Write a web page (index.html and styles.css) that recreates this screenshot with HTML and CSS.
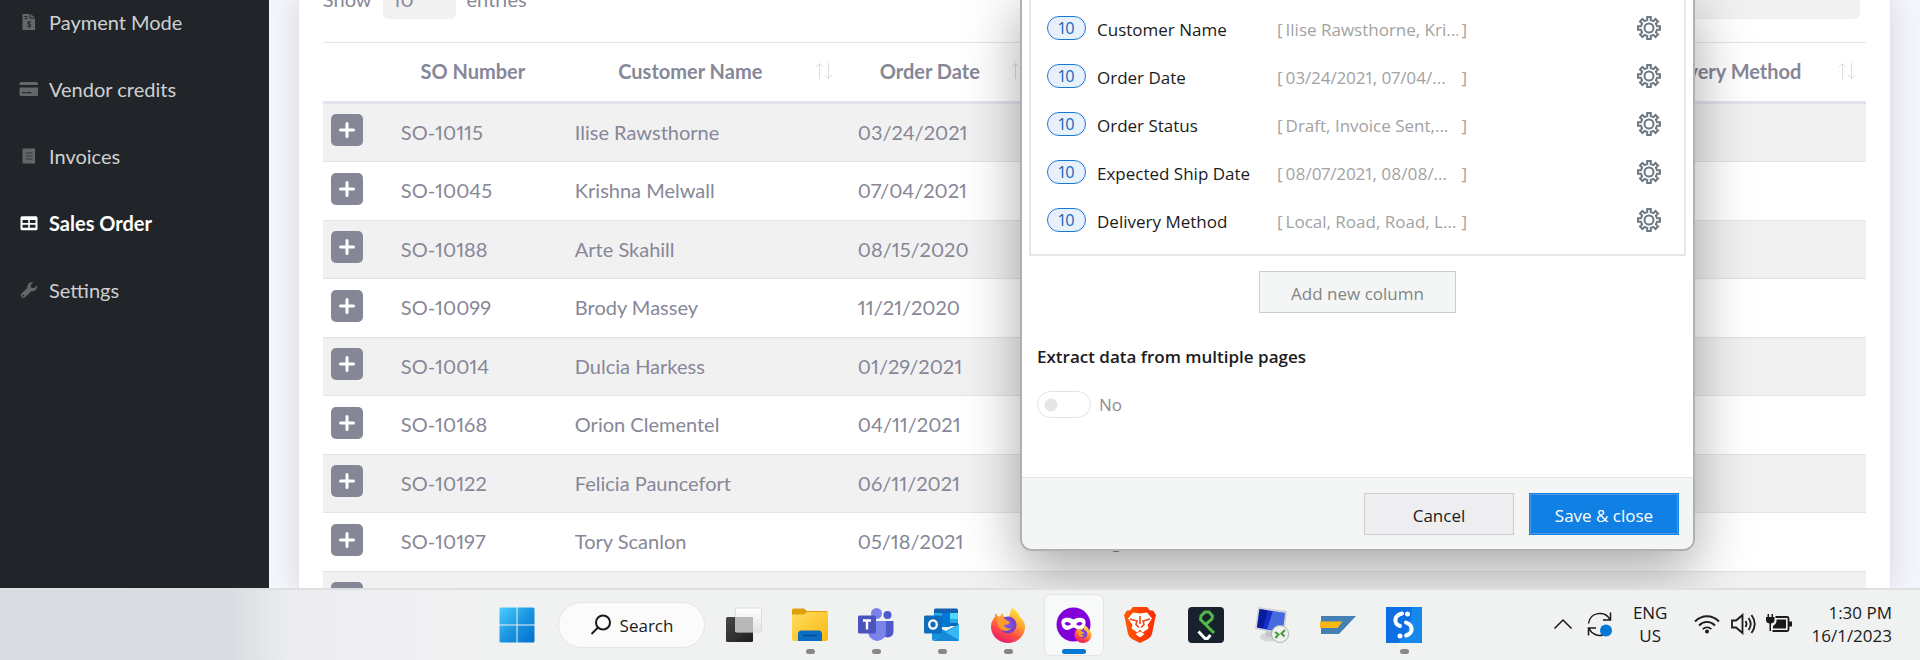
FILE: index.html
```html
<!DOCTYPE html>
<html lang="en">
<head>
<meta charset="utf-8">
<title>Sales Order</title>
<link rel="stylesheet" href="styles.css">
</head>
<body>
<svg class="sprite" aria-hidden="true">
  <symbol id="gear" viewBox="0 0 24 24"><path d="M10.2 4V1h3.6v3L16.4 5.1 18.5 2.95 21.05 5.5 18.9 7.6 20 10.2H23v3.6H20L18.9 16.4 21.05 18.5 18.5 21.05 16.4 18.9 13.8 20v3H10.2V20L7.6 18.9 5.5 21.05 2.95 18.5 5.1 16.4 4 13.8H1V10.2H4L5.1 7.6 2.95 5.5 5.5 2.95 7.6 5.1Z"/><circle cx="12" cy="12" r="4.5"/></symbol>
  <symbol id="sort" viewBox="0 0 18 18"><path d="M4.500 17V1.500M1 5l3.500-3.500L8 5M13.500 1v15.500M10 13l3.500 3.500L17 13"/></symbol>
  <symbol id="plus" viewBox="0 0 16 16"><path d="M8 1.500v13M1.500 8h13"/></symbol>
  <linearGradient id="fx" x1="0.8" y1="0" x2="0.3" y2="1"><stop offset="0" stop-color="#fff044"/><stop offset=".4" stop-color="#ffa02f"/><stop offset=".7" stop-color="#ff4a45"/><stop offset="1" stop-color="#e81a6d"/></linearGradient>
  <radialGradient id="fxg"><stop offset="0" stop-color="#7a5bf0"/><stop offset="1" stop-color="#7a3bc4"/></radialGradient>
  <symbol id="firefox" viewBox="0 0 36 36">
    <path fill="url(#fx)" d="M22 1c6 3 7 7 8 9 4 3 5 7 5 10a17 16 0 0 1-34 0c0-5 2-8 4-10V6l4 4 4-4c0 2 0 3 1 4l5 1c1-5 2-8 3-10Z"/>
    <circle cx="18" cy="18" r="8.500" fill="url(#fxg)"/>
    <path fill="#ff9a2e" d="M8 11c3-2 6-1 8 2l4 2c-1 2-3 3-6 3 1 3 4 4 7 3-3 5-12 3-13-3-1-3-1-5 0-7Z"/>
  </symbol>
</svg>
<main class="app">
  <nav class="sidebar">
    <a class="nav-link" href="#payment"><svg class="nav-icon" viewBox="0 0 20 16"><path fill="currentColor" fill-rule="evenodd" d="M3.500 0h7v4.500H16V16H3.500ZM5.500 2v1h3V2ZM5.500 4v1h3V4Z"/><path fill="currentColor" d="M11.500 0L16 3.500h-4.500Z"/><path d="M12 8.200c-1-.7-3.500-.7-3.500.7 0 1.700 3.500.9 3.500 2.600 0 1.400-2.700 1.400-3.700.5M10.200 7v7" fill="none" stroke="#212529"/></svg>Payment Mode</a>
    <a class="nav-link" href="#vendor"><svg class="nav-icon" viewBox="0 0 20 16"><path fill="currentColor" fill-rule="evenodd" d="M2 1h15.500q1.500 0 1.500 1.500V4H0.500V2.500Q0.500 1 2 1ZM.5 6.500H19v7q0 1.500-1.500 1.500H2Q.5 15 .5 13.500ZM3.500 11v1.200h3V11ZM7.500 11v1.200h5V11Z"/></svg>Vendor credits</a>
    <a class="nav-link" href="#invoices"><svg class="nav-icon" viewBox="0 0 20 16"><path fill="currentColor" d="M3.500 0l1.300 1 1.300-1 1.300 1 1.300-1 1.300 1 1.300-1 1.300 1 1.300-1 1.300 1 .8-1V16l-.8-1-1.300 1-1.300-1-1.300 1-1.300-1-1.300 1-1.300-1-1.300 1-1.300-1-1.300 1Z"/><path d="M6.500 5h7M6.500 8h7M6.500 11h7" stroke="#33373a"/></svg>Invoices</a>
    <a class="nav-link nav-link-active" href="#sales"><svg class="nav-icon" viewBox="0 0 20 16"><path fill="currentColor" fill-rule="evenodd" d="M3 1.200h14q1.500 0 1.500 1.500v11q0 1.500-1.500 1.500H3q-1.500 0-1.500-1.500v-11Q1.500 1.200 3 1.200ZM3.500 5v3h5.700V5ZM10.800 5v3h5.700V5ZM3.500 9.800v3h5.700v-3ZM10.800 9.800v3h5.700v-3Z"/></svg>Sales Order</a>
    <a class="nav-link" href="#settings"><svg class="nav-icon" viewBox="0 0 20 16"><path fill="currentColor" fill-rule="evenodd" d="M17.800 3.200c1.100 3.500-1.600 6.600-5.400 6L6 15.200c-2.300 2-5.600-1.200-3.700-3.600L8.400 6C7.800 2.200 10.500-.6 14.300.3L11.700 3l.5 2.800 2.900.5ZM4.200 12.700a.8.8 0 1 0 .1 0Z"/></svg>Settings</a>
  </nav>
  <section class="content">
    <div class="card">
      <div class="table-tools">
        <label class="length" for="len">Show <select id="len" class="field length-select"><option>10</option></select> entries</label>
        <input class="field search-field" type="search" aria-label="Search table">
      </div>
      <table class="orders">
        <colgroup><col class="c-plus"><col class="c-so"><col class="c-name"><col class="c-date"><col class="c-status"><col class="c-ship"><col class="c-method"></colgroup>
        <thead><tr>
          <th></th><th>SO Number</th>
          <th class="sortable"><div class="th-row"><span>Customer Name</span><svg class="sort"><use href="#sort"/></svg></div></th>
          <th class="sortable"><div class="th-row"><span>Order Date</span><svg class="sort"><use href="#sort"/></svg></div></th>
          <th></th><th></th>
          <th class="sortable"><div class="th-row"><span>Delivery Method</span><svg class="sort"><use href="#sort"/></svg></div></th>
        </tr></thead>
        <tbody>
          <tr><td><button class="expand" aria-label="Expand"><svg><use href="#plus"/></svg></button></td><td>SO-10115</td><td>Ilise Rawsthorne</td><td>03/24/2021</td><td></td><td></td><td></td></tr>
          <tr><td><button class="expand" aria-label="Expand"><svg><use href="#plus"/></svg></button></td><td>SO-10045</td><td>Krishna Melwall</td><td>07/04/2021</td><td></td><td></td><td></td></tr>
          <tr><td><button class="expand" aria-label="Expand"><svg><use href="#plus"/></svg></button></td><td>SO-10188</td><td>Arte Skahill</td><td>08/15/2020</td><td></td><td></td><td></td></tr>
          <tr><td><button class="expand" aria-label="Expand"><svg><use href="#plus"/></svg></button></td><td>SO-10099</td><td>Brody Massey</td><td>11/21/2020</td><td></td><td></td><td></td></tr>
          <tr><td><button class="expand" aria-label="Expand"><svg><use href="#plus"/></svg></button></td><td>SO-10014</td><td>Dulcia Harkess</td><td>01/29/2021</td><td></td><td></td><td></td></tr>
          <tr><td><button class="expand" aria-label="Expand"><svg><use href="#plus"/></svg></button></td><td>SO-10168</td><td>Orion Clementel</td><td>04/11/2021</td><td></td><td></td><td></td></tr>
          <tr><td><button class="expand" aria-label="Expand"><svg><use href="#plus"/></svg></button></td><td>SO-10122</td><td>Felicia Pauncefort</td><td>06/11/2021</td><td></td><td></td><td></td></tr>
          <tr><td><button class="expand" aria-label="Expand"><svg><use href="#plus"/></svg></button></td><td>SO-10197</td><td>Tory Scanlon</td><td>05/18/2021</td><td>Packing</td><td></td><td></td></tr>
          <tr><td><button class="expand" aria-label="Expand"><svg><use href="#plus"/></svg></button></td><td></td><td></td><td></td><td></td><td></td><td></td></tr>
        </tbody>
      </table>
    </div>
  </section>
  <div class="dialog" role="dialog" aria-label="Extract data">
    <div class="dialog-body">
      <ul class="columns">
        <li class="column"><span class="count">10</span><span class="column-name">Customer Name</span><span class="preview"><span>[</span><span class="preview-text">Ilise Rawsthorne, Kri...</span><span>]</span></span><button class="gear" aria-label="Customer Name settings"><svg><use href="#gear"/></svg></button></li>
        <li class="column"><span class="count">10</span><span class="column-name">Order Date</span><span class="preview"><span>[</span><span class="preview-text">03/24/2021, 07/04/...</span><span>]</span></span><button class="gear" aria-label="Order Date settings"><svg><use href="#gear"/></svg></button></li>
        <li class="column"><span class="count">10</span><span class="column-name">Order Status</span><span class="preview"><span>[</span><span class="preview-text">Draft, Invoice Sent,...</span><span>]</span></span><button class="gear" aria-label="Order Status settings"><svg><use href="#gear"/></svg></button></li>
        <li class="column"><span class="count">10</span><span class="column-name">Expected Ship Date</span><span class="preview"><span>[</span><span class="preview-text">08/07/2021, 08/08/...</span><span>]</span></span><button class="gear" aria-label="Expected Ship Date settings"><svg><use href="#gear"/></svg></button></li>
        <li class="column"><span class="count">10</span><span class="column-name">Delivery Method</span><span class="preview"><span>[</span><span class="preview-text">Local, Road, Road, L...</span><span>]</span></span><button class="gear" aria-label="Delivery Method settings"><svg><use href="#gear"/></svg></button></li>
      </ul>
      <button class="btn btn-add">Add new column</button>
      <h2 class="dialog-heading">Extract data from multiple pages</h2>
      <label class="toggle-row"><input class="toggle" type="checkbox" role="switch">No</label>
    </div>
    <footer class="dialog-footer">
      <button class="btn btn-cancel">Cancel</button>
      <button class="btn btn-save">Save &amp; close</button>
    </footer>
  </div>
</main>
<footer class="taskbar">
  <div class="task-items">
    <button class="task" aria-label="Start"><svg class="task-icon" viewBox="0 0 36 36"><defs><linearGradient id="w" x1="0" y1="0" x2="1" y2="1" ><stop offset="0" stop-color="#4ccfff"/><stop offset=".5" stop-color="#1c96e0"/><stop offset="1" stop-color="#0070cf"/></linearGradient></defs><path fill="url(#w)" d="M2 .5h15.500v17H.5V2Q.5.500 2 .5ZM18.500.5H34q1.500 0 1.500 1.500v15.500h-17ZM.5 18.500h17v17H2Q.5 35.500.5 34ZM18.500 18.500h17V34q0 1.500-1.500 1.500H18.500Z"/></svg></button>
    <button class="task-search"><svg class="search-icon" viewBox="0 0 22 22"><circle cx="13" cy="8.500" r="7"/><path d="M8 13.500l-6.500 6.500"/></svg>Search</button>
    <button class="task" aria-label="Task view"><svg class="task-icon" viewBox="0 0 36 36"><defs><linearGradient id="tv" x1="0" y1="0" x2="1" y2="1"><stop offset="0" stop-color="#484848"/><stop offset="1" stop-color="#1c1c1c"/></linearGradient><linearGradient id="tw" x1="0" y1="0" x2="0" y2="1"><stop offset="0" stop-color="#fff"/><stop offset="1" stop-color="#e4e4e4"/></linearGradient></defs><rect y="10" width="27" height="25" rx="1.500" fill="url(#tv)"/><rect x="9.500" y="1" width="26" height="24" rx="1.500" fill="url(#tw)" stroke="#dcdcdc"/><rect x="9" y="10" width="18" height="15" fill="#b9b9b9"/></svg></button>
    <button class="task running" aria-label="File Explorer"><svg class="task-icon" viewBox="0 0 36 36"><defs><linearGradient id="fo" x1="0" y1="0" x2="1" y2="1"><stop offset="0" stop-color="#ffdc60"/><stop offset="1" stop-color="#fbb80f"/></linearGradient></defs><path fill="#dfa00c" d="M0 3q0-1.500 1.500-1.500h10.500L15 4h20v6H0Z"/><path fill="url(#fo)" d="M0 7.500h12L15 5h20.500q.5 0 .5 1v26q0 2-2 2H2q-2 0-2-2Z"/><path fill="#0b6cc4" d="M6 34v-7q0-3.500 3.500-3.500h17q3.500 0 3.500 3.500v7Z"/><path d="M11 28.500h14" stroke="#0a4a94" stroke-width="1.500"/></svg></button>
    <button class="task running" aria-label="Teams"><svg class="task-icon" viewBox="0 0 36 36"><circle cx="29.500" cy="8" r="4" fill="#5059c9"/><path fill="#5059c9" d="M25 14h10.500v10q0 6-6 6.500l-4.500-1Z"/><circle cx="18.500" cy="6.500" r="5.500" fill="#7b83eb"/><path fill="#7b83eb" d="M10 14h18v11q0 8-9 9-8-1-9-9Z"/><rect y="8.500" width="18" height="18" rx="1.500" fill="#4b53bc"/><path d="M5 13.500h8M9 13.500v9" stroke="#fff" stroke-width="2.400"/></svg></button>
    <button class="task running" aria-label="Outlook"><svg class="task-icon" viewBox="0 0 36 36"><path fill="#0f62b0" d="M10 3q0-1.500 1.500-1.500h21Q34 1.500 34 3v16H10Z"/><path fill="#28a8ea" d="M10 6h8v14h-8ZM26 6h8v10h-8Z"/><path fill="#0078d4" d="M18 6h8v14h-8Z"/><path fill="#50d9ff" d="M26 6h8v6h-8Z"/><path fill="#1490df" d="M8 18l14 6 13-7v15q0 2-2 2H10q-2 0-2-2Z"/><path fill="#35b8f1" d="M35 17L9 33.500q.5.500 2 .5h22q2 0 2-2Z"/><path fill="#1688d8" d="M21 25l14 8q-1 1-2 1H10Z"/><rect y="8.500" width="18" height="18" rx="1.500" fill="#0f6cbd"/><ellipse cx="9" cy="17.500" rx="3.800" ry="4.200" fill="none" stroke="#fff" stroke-width="2.300"/></svg></button>
    <button class="task running" aria-label="Firefox"><svg class="task-icon"><use href="#firefox"/></svg></button>
    <button class="task active" aria-label="Private browsing"><svg class="task-icon" viewBox="0 0 36 36"><circle cx="17.500" cy="17.500" r="17" fill="#8000d7"/><path fill="#fff" fill-rule="evenodd" d="M17.500 12.500C20 11 23 10.500 26 11c3 .6 4 3 3.500 6-.7 4-3 6-6 6-2.800 0-4-2.500-6-2.500s-3.200 2.500-6 2.500c-3 0-5.300-2-6-6C5 14 6 11.600 9 11c3-.5 6 0 8.500 1.500ZM8.500 16.500c2 2.700 4.500 2.500 6.500.5-2-2.500-5-2.800-6.500-.5ZM20 17c2 2 4.500 2.200 6.500-.5-1.500-2.300-4.500-2-6.500.5Z"/><use href="#firefox" x="18" y="18" width="18" height="18"/></svg></button>
    <button class="task" aria-label="Brave"><svg class="task-icon" viewBox="0 0 36 36"><defs><linearGradient id="br"><stop offset="0" stop-color="#ff5a00"/><stop offset="1" stop-color="#fb2a08"/></linearGradient></defs><path fill="url(#br)" d="M11 0h14l3 3.500h3L34 8l-1 4-3 15q-1 3-4 5l-8 4-8-4q-3-2-4-5L3 12 2 8l3-4.500h3Z"/><path fill="#fff" d="M18 6.500l7-1 5 6-4.500 6.500 1 3.500-6 4-2.500-3-2.500 3-6-4 1-3.500L6 11.500l5-6ZM18 24.500l4.500 2.500-4.500 3.500-4.500-3.500Z"/><path d="M8 12l7 2-1 3.500 3 3M28 12l-7 2 1 3.500-3 3M18 9v8" fill="none" stroke="#fb4312" stroke-width="1.600"/></svg></button>
    <button class="task" aria-label="Code tool"><svg class="task-icon" viewBox="0 0 36 36"><rect width="36" height="36" rx="4" fill="#18222c"/><path d="M26 26L12.500 12.500l.5-3.500 4-4h4l3.500 4-.5 3-7 6" fill="none" stroke="#50b848" stroke-width="3"/><path d="M10.500 24.500l6.500 7h2.500l3-3.500" fill="none" stroke="#fff" stroke-width="3"/></svg></button>
    <button class="task" aria-label="Remote Desktop"><svg class="task-icon" viewBox="0 0 36 36"><ellipse cx="15" cy="30" rx="9" ry="4.500" fill="#d4d6d8"/><path fill="#c2c5ca" d="M12 24h7l1 6h-8Z"/><path fill="#cfd2d6" d="M4 0l29 4-3 24L1 22Z"/><path fill="#1530c8" d="M5.500 2l25.500 4-2.500 19.500L3 20.500Z"/><path fill="#6f9cf0" d="M19 4l12 2-2.500 19.500L13 22Z" opacity=".55"/><path fill="#06128c" d="M5.500 2l8 1.500L9 21.500l-6-1Z" opacity=".7"/><circle cx="26" cy="27" r="8.500" fill="#f0f2f0" stroke="#aeb1b4"/><path d="M21 25l3.500 2.500-3 3.500M31 23l-3.500 3.500 3 3" fill="none" stroke="#3f9a35" stroke-width="2"/></svg></button>
    <button class="task" aria-label="Editor"><svg class="task-icon" viewBox="0 0 36 36"><path fill="#4580b4" d="M1 9h35L19 27H1Z"/><path fill="#fdb714" d="M0 14.500h22.500L17.500 21H0Z"/></svg></button>
    <button class="task running" aria-label="Automation"><svg class="task-icon" viewBox="0 0 36 36"><path fill="#0c6fe2" d="M0 0h36v36H0Z"/><path fill="#1e9cf4" d="M36 0v36H12Q26 24 26 0Z" opacity=".6"/><path d="M16 6.500C7 9 8 17 14 19M20 15.500c8 3 7 11 0 13" fill="none" stroke="#fff" stroke-width="4" stroke-linecap="round"/><circle cx="21.500" cy="7" r="2.500" fill="#fff"/><circle cx="14" cy="29" r="2.500" fill="#fff"/></svg></button>
  </div>
  <div class="tray">
    <button class="tray-btn" aria-label="Show hidden icons"><svg class="chevron" viewBox="0 0 20 12"><path d="M1.500 10.500L10 2l8.500 8.500"/></svg></button>
    <button class="tray-btn" aria-label="Updates"><svg class="sync" viewBox="0 0 26 26"><path d="M1.500 12.500C3 1 18 -1 23 8.500M23.500 1.500v7.500h-7.500M1.500 24.500v-7.500h7.500M2 17.500c3 6 9 8 14 6.500"/><circle cx="19" cy="19.500" r="6" class="sync-dot"/></svg></button>
    <button class="lang"><span>ENG</span><span>US</span></button>
    <button class="status" aria-label="Network, volume and battery">
      <svg class="status-icon" viewBox="0 0 26 24"><path d="M1 9.500c7-7 17-7 24 0M5 13.500c5-4.700 11-4.700 16 0M8.800 17.200c2.500-2.400 6-2.400 8.500 0" /><circle cx="13" cy="19.500" r="2" fill="#1a1a1a" stroke="none"/></svg>
      <svg class="status-icon" viewBox="0 0 26 24"><path d="M2 8.500h4L12.500 3v18L6 15.500H2ZM15.500 9q2 3 0 6M18.500 6q4.500 6 0 12M21.500 3q6.500 9 0 18"/></svg>
      <svg class="status-icon" viewBox="0 0 26 24"><path d="M9.500 5H21q1.500 0 1.500 1.500v11q0 1.500-1.500 1.500H6.500"/><path stroke="none" fill="#1a1a1a" d="M10.500 7.500H20v9H7v-2.500q3-1.500 3.500-4.500ZM23 9.500h3v5h-3ZM0 5h1.500V2H3v3h2.500V2H7v3h1.500v3q0 3-3.500 3.500V19H3.500v-7.500Q0 11 0 8Z"/></svg>
    </button>
    <button class="clock"><span>1:30 PM</span><span>16/1/2023</span></button>
  </div>
</footer>
</body>
</html>
```
FILE: styles.css
```css
* { box-sizing: border-box; }
body {
  margin: 0;
  height: 100vh;
  display: grid;
  grid-template-rows: 1fr auto;
  overflow: hidden;
  font-family: "Open Sans", "Noto Sans", sans-serif;
  font-size: 17px;
}
button { font: inherit; margin: 0; padding: 0; border: 0; background: none; color: inherit; }
.sprite { position: absolute; width: 0; height: 0; }

.app {
  position: relative;
  display: flex;
  min-height: 0;
  overflow: hidden;
  font-family: Lato, "Open Sans", sans-serif;
  font-size: 20px;
  font-variant-numeric: proportional-nums;
  color: #868797;
}
.sidebar {
  width: 14%;
  background: #212529;
  padding-left: 19px;
  margin-top: -12px;
  flex: none;
}
.nav-link {
  display: flex;
  align-items: center;
  gap: 10px;
  height: 67px;
  color: #ced0d1;
  text-decoration: none;
}
.nav-icon { width: 20px; height: 16px; color: #63676a; }
.nav-link-active { color: #fff; font-weight: 700; }
.nav-link-active .nav-icon { color: #fff; }

.content { flex: 1; min-width: 0; padding: 0 29px; background: #f5f6fb; }
.card {
  height: 100%;
  overflow: hidden;
  background: #fff;
  padding: 0 24px;
  border: solid #e4e5f0;
  border-width: 0 1px;
  box-shadow: 0 0 28px rgba(20, 20, 50, .14);
}
.table-tools {
  display: flex;
  justify-content: space-between;
  margin: -19px 6px 23px 0;
}
.length { display: flex; align-items: center; gap: 11px; padding-bottom: 2px; }
.field {
  height: 38px;
  border: 0;
  border-radius: 6px;
  background: #f1f1f1;
  color: #868797;
  font: inherit;
}
.length-select { width: 73px; padding: 0 10px 3px; margin-bottom: -2px; appearance: none; }
.search-field { width: 240px; }

.orders {
  width: 100%;
  table-layout: fixed;
  border-collapse: separate;
  border-spacing: 0;
}
.c-plus { width: 63px; }
.c-so { width: 174px; }
.c-name { width: 283px; }
.c-date { width: 196px; }
.c-status { width: 220px; }
.c-method { width: 257px; }
.orders th {
  height: 62px;
  padding: 0 15px 2px;
  border-top: 1px solid #e3e4ef;
  border-bottom: 3px solid #e1e3ed;
  font-weight: 700;
}
.orders .sortable { padding-right: 10px; }
.th-row { display: flex; align-items: center; }
.th-row span { flex: 1; }
.sort { width: 18px; height: 18px; margin-left: 9px; fill: none; stroke: #dcdde4; stroke-width: 1; }
.orders td {
  height: 59px;
  padding: 0 15px 2px;
  border-bottom: 1px solid #e1e3ee;
}
.orders tbody tr:nth-child(odd) td { height: 58px; background: #f1f1f1; }
.orders td:first-child { padding: 0 8px; }
.expand {
  display: flex;
  align-items: center;
  justify-content: center;
  width: 32px;
  height: 32px;
  margin-bottom: 5px;
  border-radius: 5px;
  background: #858796;
}
.expand svg { width: 16px; height: 16px; stroke: #fff; stroke-width: 3; stroke-linecap: round; }

.dialog {
  position: absolute;
  left: 1020px;
  bottom: 37px;
  width: 675px;
  display: flex;
  flex-direction: column;
  border: 2px solid #afb1b5;
  border-radius: 12px;
  background: #fff;
  color: #1b1b1b;
  font-family: "Open Sans", "Noto Sans", sans-serif;
  font-size: 17px;
  box-shadow: 0 20px 56px rgba(0, 0, 0, .34);
}
.dialog-body { padding: 0 7px; display: flex; flex-direction: column; }
.columns {
  margin: 0;
  padding: 12px 23px 10px 16px;
  list-style: none;
  border: 2px solid #e6e7e8;
}
.column {
  display: grid;
  grid-template-columns: 39px 169px 190px 1fr;
  column-gap: 11px;
  align-items: center;
  height: 48px;
}
.column-name, .preview { white-space: nowrap; padding-top: 2px; }
.count {
  height: 24px;
  border: 1px solid #1a78d6;
  border-radius: 12px;
  background: #e8f1fb;
  color: #1f66b0;
  font-size: 16px;
  line-height: 22px;
  text-align: center;
}
.preview { display: flex; gap: 3px; color: #a2a2a2; }
.preview-text { flex: 1; overflow: hidden; }
.gear { justify-self: end; width: 24px; height: 24px; }
.gear svg { display: block; width: 24px; height: 24px; fill: none; stroke: #6d7881; stroke-width: 2; }
.btn { height: 42px; width: 150px; border: 1px solid #cccdd1; padding-top: 2px; }
.btn-add {
  align-self: center;
  width: 197px;
  margin-top: 15px;
  background: #f4f6f5;
  color: #848484;
}
.dialog-heading {
  margin: 32px 8px 22px;
  font-size: 17px;
  line-height: 24px;
  font-weight: 600;
}
.toggle-row {
  display: flex;
  align-items: center;
  gap: 8px;
  height: 26px;
  margin: 0 8px 60px;
  color: #8e8e8e;
}
.toggle {
  appearance: none;
  width: 54px;
  height: 27px;
  margin: 0;
  border: 1px solid #e3e3e3;
  border-radius: 14px;
  background: radial-gradient(circle at 13px 13px, #e6e6e6 6px, transparent 7px);
}
.dialog-footer {
  display: flex;
  justify-content: flex-end;
  gap: 15px;
  padding: 15px 14px 14px;
  border-top: 1px solid #e2e3e4;
  border-radius: 0 0 10px 10px;
  background: #f4f6f6;
}
.btn-cancel { background: #eeeef0; }
.btn-save { background: #1080e4; border-color: #1080e4; color: #fff; box-shadow: inset 0 0 0 1px #479ce9; }

.taskbar {
  display: grid;
  grid-template-columns: 1fr auto 1fr;
  height: 72px;
  border-top: 2px solid #dedfe0;
  background: linear-gradient(90deg, #d8dbe1, #d9dde1 12%, #ebecef 15%, #eeeef2 18%, #f0f1f1 25%);
  color: #1a1a1a;
}
.task-items { grid-column: 2; display: flex; align-items: center; padding-left: 1px; }
.task {
  position: relative;
  display: flex;
  align-items: center;
  justify-content: center;
  width: 58px;
  height: 60px;
  margin: 0 4px;
  border-radius: 6px;
}
.task-icon { width: 36px; height: 36px; }
.task-search {
  display: flex;
  align-items: center;
  justify-content: center;
  gap: 8px;
  width: 147px;
  height: 46px;
  margin: 0 6px 0 8px;
  border: 1px solid #e6e6e7;
  border-radius: 23px;
  background: #fbfbfb;
}
.search-icon { width: 22px; height: 22px; fill: none; stroke: #1a1a1a; stroke-width: 2; }
.running::after, .active::after {
  content: "";
  position: absolute;
  bottom: 1px;
  width: 9px;
  height: 5px;
  border-radius: 3px;
  background: #878787;
}
.active { background: #f8f9f9; box-shadow: 0 0 0 1px #e4e5e6; }
.active::after { width: 24px; background: #0078d4; }
.tray {
  display: flex;
  align-items: center;
  justify-content: flex-end;
  padding: 0 28px 2px 0;
}
.tray-btn { display: flex; }
.chevron { width: 20px; height: 12px; fill: none; stroke: #1a1a1a; stroke-width: 1.500; margin-right: 14px; }
.sync { width: 26px; height: 26px; fill: none; stroke: #1a1a1a; stroke-width: 1.500; }
.sync-dot { fill: #0078d4; stroke: none; }
.lang, .clock { display: grid; line-height: 23px; }
.lang { margin: 0 27px 0 20px; }
.clock { margin-left: 19px; text-align: right; }
.status { display: flex; gap: 10px; }
.status-icon { width: 26px; height: 24px; fill: none; stroke: #1a1a1a; stroke-width: 1.800; }
```
